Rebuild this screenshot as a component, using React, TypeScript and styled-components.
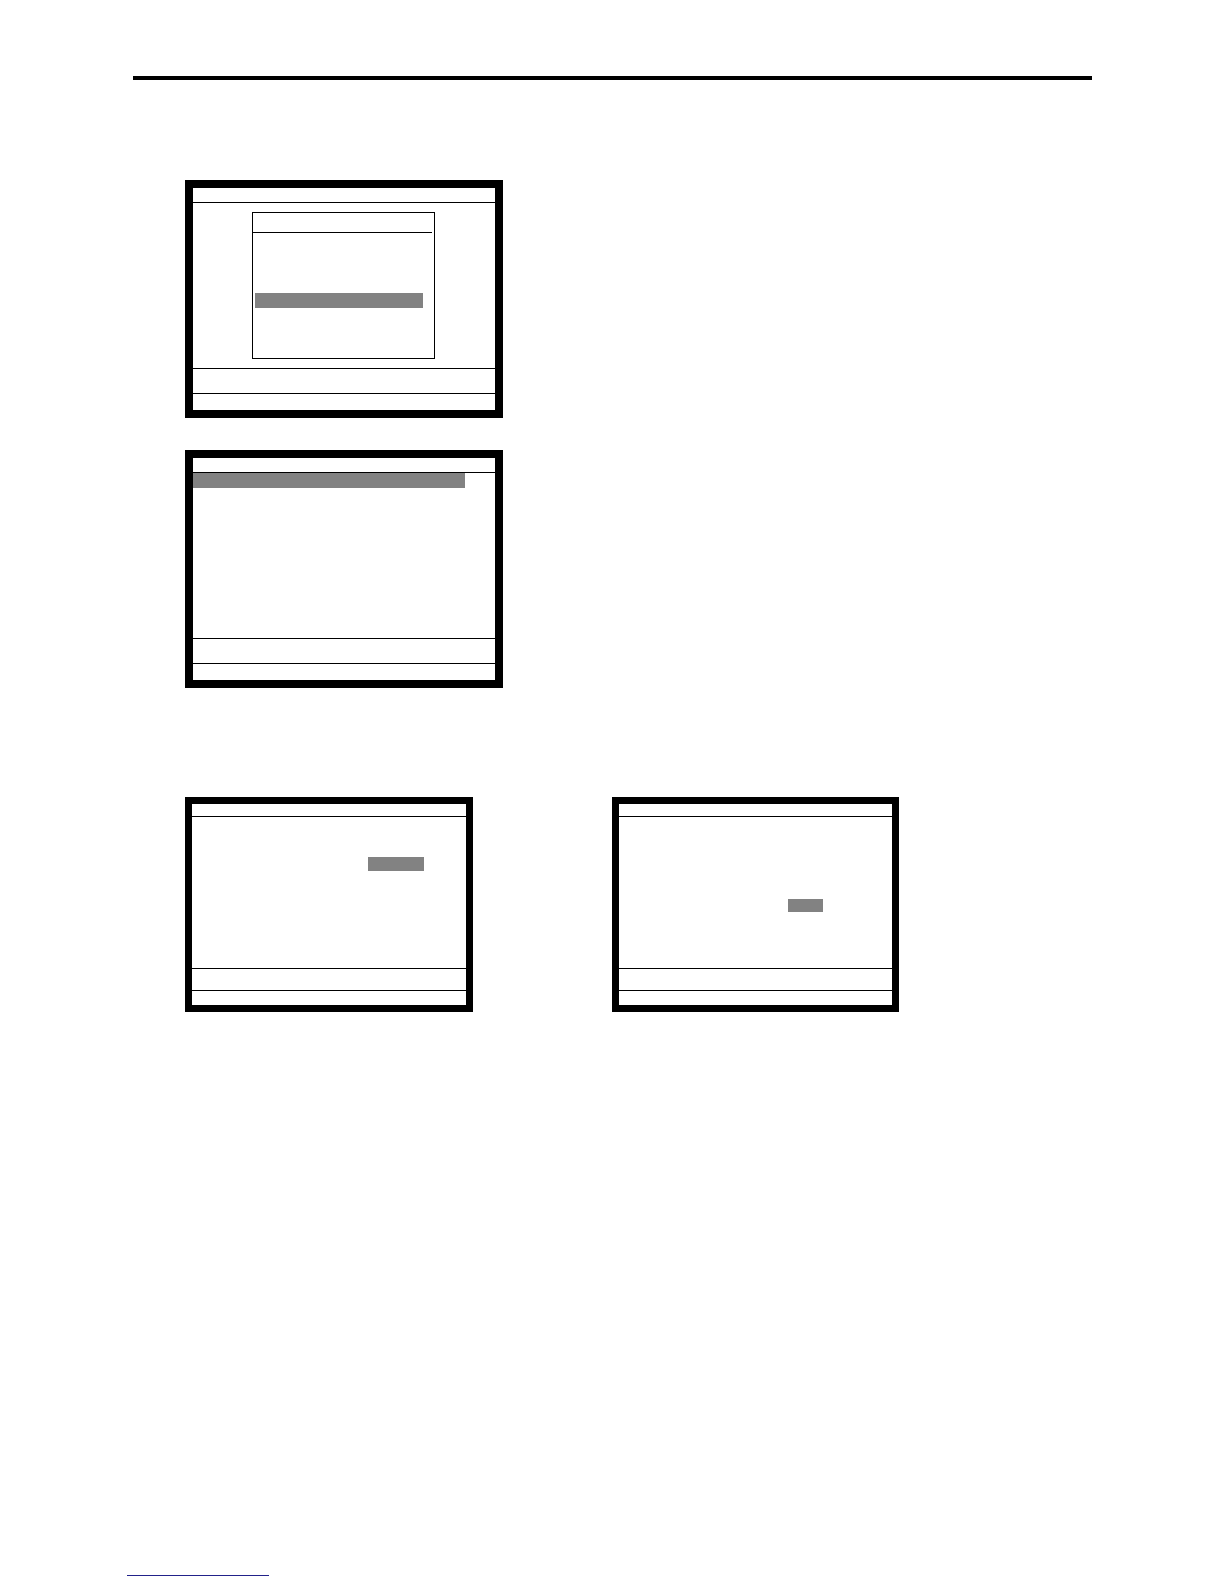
import React from "react";
import styled, { createGlobalStyle } from "styled-components";

const Global = createGlobalStyle`
  html, body { margin: 0; padding: 0; background: #ffffff; }
  body { font-family: "Liberation Sans", Arial, sans-serif; }
`;

const Page = styled.div`
  width: 1224px;
  min-height: 1584px;
  padding-top: 76px;
  box-sizing: border-box;
  display: flex;
  flex-direction: column;
`;

const HeaderRule = styled.div`
  margin-left: 133px;
  width: 959px;
  height: 4px;
  background: #000;
`;

const Figures = styled.div`
  margin-left: 185px;
  display: flex;
  flex-direction: column;
`;

const Row = styled.div`
  display: flex;
  gap: 139px;
  margin-top: 109px;
`;

const Screen = styled.div<{ $w: number; $h: number; $b: number; $mt?: number }>`
  box-sizing: border-box;
  width: ${(p) => p.$w}px;
  height: ${(p) => p.$h}px;
  border: ${(p) => p.$b}px solid #000;
  margin-top: ${(p) => p.$mt ?? 0}px;
  display: flex;
  flex-direction: column;
  background: #fff;
`;

const Bar = styled.div<{ $h: number; $line?: boolean }>`
  height: ${(p) => p.$h}px;
  flex: none;
  border-bottom: ${(p) => (p.$line ? "1px solid #000" : "none")};
`;

const Body = styled.div<{ $h: number }>`
  height: ${(p) => p.$h}px;
  flex: none;
  border-bottom: 1px solid #000;
  display: flex;
  flex-direction: column;
  align-items: flex-start;
`;

const Dialog = styled.div`
  box-sizing: border-box;
  margin-top: 9px;
  margin-left: 59px;
  width: 183px;
  height: 147px;
  border: 1px solid #000;
  display: flex;
  flex-direction: column;
  align-items: flex-start;
`;

const DialogTitle = styled.div`
  align-self: stretch;
  height: 19px;
  margin-right: 2px;
  border-bottom: 1px solid #000;
`;

const Highlight = styled.div<{ $x: number; $y: number; $w: number; $h: number }>`
  margin-left: ${(p) => p.$x}px;
  margin-top: ${(p) => p.$y}px;
  width: ${(p) => p.$w}px;
  height: ${(p) => p.$h}px;
  background: #828282;
`;

const LinkLine = styled.div`
  margin-top: 563px;
  margin-left: 127px;
  width: 142px;
  height: 1px;
  background: #22228a;
`;

export default function App() {
  return (
    <>
      <Global />
      <Page>
        <HeaderRule />
        <Figures>
          <Screen $w={318} $h={238} $b={8} $mt={100}>
            <Bar $h={14} $line />
            <Body $h={165}>
              <Dialog>
                <DialogTitle />
                <Highlight $x={2} $y={60} $w={168} $h={15} />
              </Dialog>
            </Body>
            <Bar $h={24} $line />
            <Bar $h={19} />
          </Screen>

          <Screen $w={318} $h={238} $b={8} $mt={32}>
            <Bar $h={14} $line />
            <Body $h={165}>
              <Highlight $x={0} $y={0} $w={272} $h={15} />
            </Body>
            <Bar $h={24} $line />
            <Bar $h={19} />
          </Screen>

          <Row>
            <Screen $w={288} $h={215} $b={7}>
              <Bar $h={12} $line />
              <Body $h={151}>
                <Highlight $x={176} $y={40} $w={56} $h={14} />
              </Body>
              <Bar $h={21} $line />
              <Bar $h={17} />
            </Screen>
            <Screen $w={287} $h={215} $b={7}>
              <Bar $h={12} $line />
              <Body $h={151}>
                <Highlight $x={169} $y={82} $w={35} $h={13} />
              </Body>
              <Bar $h={21} $line />
              <Bar $h={17} />
            </Screen>
          </Row>
        </Figures>
        <LinkLine />
      </Page>
    </>
  );
}
